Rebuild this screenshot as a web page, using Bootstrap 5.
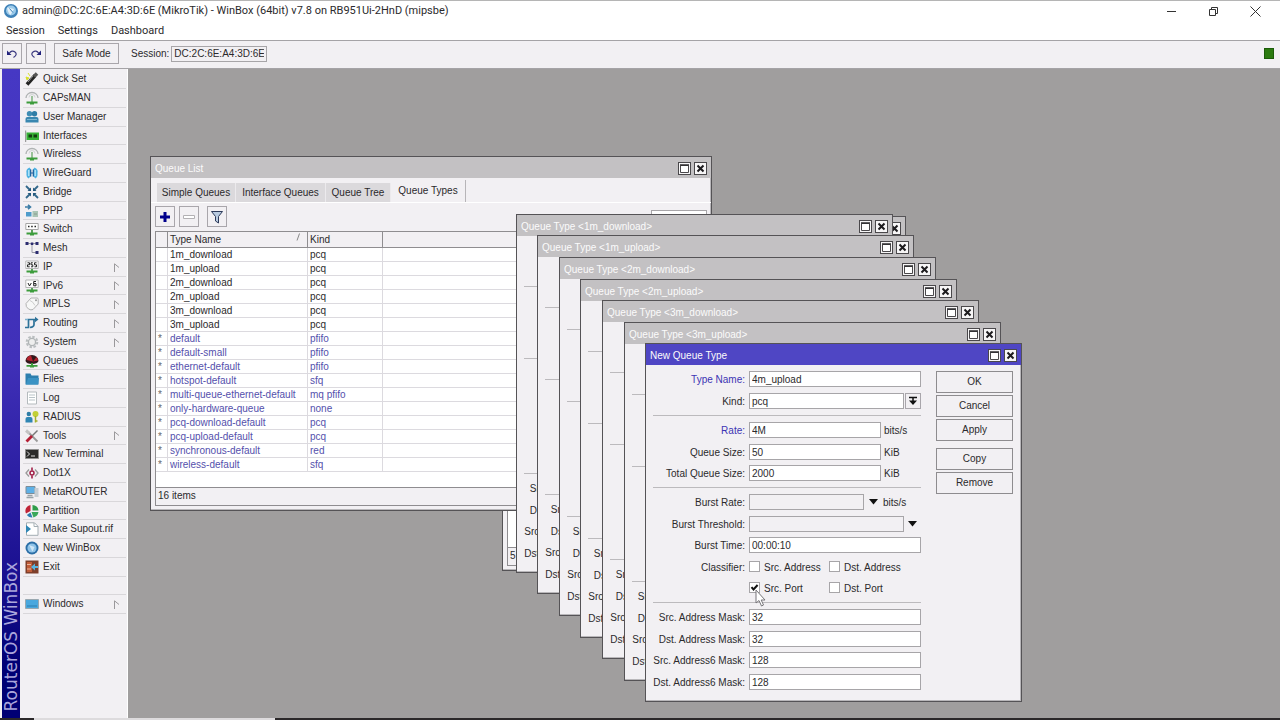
<!DOCTYPE html>
<html lang="en">
<head>
<meta charset="utf-8">
<meta name="viewport" content="width=device-width, initial-scale=1">
<title>WinBox</title>
<link rel="stylesheet" href="https://cdn.jsdelivr.net/npm/bootstrap@5.3.0/dist/css/bootstrap.min.css">
<style>
:root{--panel:#f2f0f3;--line:#a9a6ab;--ink:#2b2a2c;--blue:#3c34b4}
body{font:10px/14px "Liberation Sans",Arial,sans-serif;color:var(--ink);background:var(--panel)}
.ui-sys{font-family:Roboto,sans-serif;font-size:11px;line-height:16px}
.caption-bar{height:22px;border-top:1px solid #b5b5b5;padding-bottom:1px}
.menu-bar{height:19px;border-bottom:1px solid #a5a3a6;padding:1px 6px 0;gap:13px}
.menu-bar a,.side-nav a{color:var(--ink);text-decoration:none}
.sys-btn{width:42px;height:20px;border:0;background:none;padding:0;line-height:0}
.tool-strip{height:28px;border-bottom:1px solid #a5a3a6;padding:0 2px 2px}
.flat-btn{font:inherit;color:var(--ink);background:var(--panel);border:1px solid var(--line);border-radius:0;padding:0;display:flex;align-items:center;justify-content:center}
.sq{width:20px;height:21px}
.safe-btn{width:65px;height:21px}
.session-label{margin:0 2px 0 12px}
.field{font:inherit;color:var(--ink);background:#fff;border:1px solid #a7a5a8;border-radius:0;padding:0 2px;height:16px;min-height:0}
.field:disabled{background:var(--panel);opacity:1}
.session-box{width:96px;background:var(--panel)}
.led{width:10px;height:11px;background:#2c7a10;border:1px solid #1c5c0a;margin-right:4px}
.brand-strip{width:18px;margin-left:2px;background:linear-gradient(#4638c4 0,#4030b8 45%,#1a1090 78%,#000074 92%);color:#aaa6dc;font:17px/18px "DejaVu Sans",sans-serif}
.brand-strip span{writing-mode:vertical-rl;transform:rotate(180deg);padding-top:7px;white-space:pre}
.side-nav{width:108px;margin:0;padding:1px 1px 0 3px;border-right:1px solid #fff}
.side-nav li{height:19px;border-bottom:1px solid #d9d7da}
.side-nav li:nth-child(4n){height:18px}
.side-nav a{height:100%;padding-left:2px;padding-right:6px}
.side-nav .ico{width:14px;height:14px;margin-right:4px;flex:none}
.desk{background:#a09e9e}
.bottom-edge{height:2px;background:#2b282a}
.bottom-edge i{width:241px;margin-left:34px;background:#dddbdd}
.win{position:absolute;background:var(--panel);border:1px solid #555356;box-shadow:inset -1px -1px #b9b7ba}
.win-title{height:21px;background:#c3c1c3;color:#fbfbfb;padding:2px 4px 0;gap:3px}
.win-title.live{background:#4f46c4}
.win-btn{width:13px;height:13px;background:#f7f6f7;border:1px solid #4a484b;padding:0;line-height:0}
.win-queue{left:22px;top:87px;width:562px;height:355px}
.win-under{left:374px;top:147px;width:404px;height:355px}
.qtabs{padding:2px 4px 0 6px;height:25px;border-bottom:1px solid #fff}
.qtabs button{font:inherit;color:var(--ink);border:0;border-right:1px solid #eceaed;background:#dbd9dc;height:19px;padding:0;margin-top:3px;white-space:nowrap}
.qtabs .on{background:var(--panel);height:22px;margin:0;border-right:1px solid #b7b5b8}
.t1{width:79px}.t2{width:90px}.t3{width:65px}.t4{width:75px}
.find-box{width:56px}
.qbuttons{padding:3px 4px 0}
.qgrid{table-layout:fixed;border-collapse:separate;border-spacing:0;width:100%}
.qgrid th{height:16px;padding:1px 2px 0;font-weight:400;line-height:14px;background:var(--panel);border-right:1px solid #8f8d90;border-bottom:1px solid #8f8d90}
.qgrid td{height:14px;padding:0 2px;line-height:13px;border-right:1px solid #dcdadf;border-bottom:1px solid #dcdadf;white-space:nowrap}
.qgrid .dyn td{color:#5450ac}
.qgrid .dyn td:first-child{color:#666}
.frame-list{border:1px solid #8f8d90;border-right-color:#c5c3c6;background:#fff;margin:4px}
.status-line{height:18px;background:var(--panel);border-top:1px solid #8f8d90;padding:1px 2px}
.dlg{width:377px}
.dlg-body{padding:6px 8px 0 7px}
.dlg-form{width:268px}
.group{border-top:1px solid #bcbabd;padding-top:6px}
.group:first-child{border:0;padding:0 0 1px}
.line{height:22px}
.line:nth-child(even){height:21px}
.line .cap{width:96px;padding-right:4px;text-align:right;line-height:17px;flex:none;white-space:nowrap}
.line .changed{color:var(--blue)}
.line .unit{line-height:17px;padding-left:3px;white-space:nowrap}
.w-rate{width:132px}.w-burst{width:115px}.w-thr{width:155px;flex:none}
.drop{width:19px;height:16px;border:0;background:none;padding:0;line-height:0}
.drop-box{width:16px;height:16px;margin-left:1px}
.tick{appearance:none;width:11px;height:11px;margin:2px 4px 0 0;background:#fff;border:1px solid #a7a5a8;flex:none}
.tick:checked{background:#fff url("data:image/svg+xml,%3Csvg xmlns='http://www.w3.org/2000/svg' viewBox='0 0 9 9'%3E%3Cpath d='M1.5 4.2l2 2.3L7.6 2' fill='none' stroke='%23111' stroke-width='2'/%3E%3C/svg%3E")}
.opt{width:80px;line-height:17px;white-space:nowrap}
.dlg-btns{width:77px;gap:2px}
.dlg-btns button{height:22px;border-color:#8e8c8f}
.dlg-btns .apart{margin-top:5px}
.pointer{position:absolute;left:109px;top:245px;width:12px;height:18px}
.dlg-foot{height:6px}
</style>
</head>
<body class="vh-100 overflow-hidden d-flex flex-column">

<svg class="d-none" xmlns="http://www.w3.org/2000/svg">
<symbol id="wand" viewBox="0 0 14 14"><path d="M1 5l3 1L2 8zM3 1l2 3" fill="#d8e02c" stroke="#d8e02c"/><path d="M2 12.500L10 3.500" stroke="#222" stroke-width="3.600"/><path d="M9 4.500l3-3" stroke="#555" stroke-width="3.600"/><path d="M3 10l5-6" stroke="#999"/></symbol>
<symbol id="antenna" viewBox="0 0 14 14"><path d="M1 7a6 5.500 0 0 1 12 0" fill="none" stroke="#aeb2b2" stroke-width="1.300"/><path d="M4 6.500a3 3 0 0 1 6 0" fill="none" stroke="#d0d4d4"/><path d="M7 5v6" stroke="#7bb07b" stroke-width="1.500"/><path d="M1.500 11.500h11M5 12.500h4" stroke="#3c9c3c" stroke-width="1.800"/></symbol>
<symbol id="users" viewBox="0 0 14 14"><circle cx="4.500" cy="3.800" r="2.700" fill="#3f8db4"/><circle cx="9.500" cy="3.800" r="2.700" fill="#2f7da6"/><path d="M.5 12.500V9q0-2 2-2h9q2 0 2 2v3.500z" fill="#3987b0"/><path d="M2 9.500h10" stroke="#7ab6d2"/></symbol>
<symbol id="nic" viewBox="0 0 14 14"><path d="M.7 1.500V13" stroke="#888"/><path d="M1.500 3.500H14V11H1.500z" fill="#35b135"/><path d="M3.500 5.500H7v3H3.500zM8.500 5.500H12v3H8.500z" fill="#123d12"/></symbol>
<symbol id="guard" viewBox="0 0 14 14"><path d="M4.500 1.500Q.5 3 1.500 7q-.5 4 2 5.500L6 10V3.500zM9.500 1.500q4 1.500 3 5.500.5 4-2 5.500L8 10V3.500z" fill="#4fb2e2"/><path d="M3.800 4v6M10.200 4v6" stroke="#c4ecfa" stroke-width="1.200"/><path d="M5.700 3.500v7M8.300 3.500v7M5.700 7h2.600" stroke="#1c5f9c" stroke-width="1.200"/></symbol>
<symbol id="bridge" viewBox="0 0 14 14"><path d="M1 1l4 4M13 1L9 5M1 13l4-4M13 13L9 9" stroke="#33688c" stroke-width="1.800"/><path d="M6 2.500V6H2.500zM8 2.500V6h3.500zM6 11.500V8H2.500zM8 11.500V8h3.500z" fill="#25587c"/></symbol>
<symbol id="ppp" viewBox="0 0 14 14"><path d="M0 3h4.500M3 .8L5.500 3 3 5.200" fill="none" stroke="#3b7ca6" stroke-width="1.600"/><path d="M1 8h5.500v4.500H1z" fill="#4f9ccb"/><path d="M7.500 7h5.500v6H7.500z" fill="#a9c4b4"/><path d="M9 10h3" stroke="#8a9a90"/></symbol>
<symbol id="switch" viewBox="0 0 14 14"><path d="M.8 1.500h12.400v6H.8z" fill="#fff" stroke="#a5a5a5"/><path d="M3 4.500h1.500M6.200 4.500h1.500M9.500 4.500H11" stroke="#222" stroke-width="1.500"/><path d="M7 8v3" stroke="#58a058" stroke-width="2"/><path d="M1.500 11.500h11M5 12.500h4" stroke="#3c9c3c" stroke-width="1.800"/></symbol>
<symbol id="mesh" viewBox="0 0 14 14"><path d="M2 2.500h9M7 3v8.500h4.500" fill="none" stroke="#9a9aa8"/><path d="M.5 1h3v3h-3zM5.800 1.500h2.500V4H5.800zM10.500 1h3v3h-3zM10.500 10h3v3h-3z" fill="#2c2c70"/></symbol>
<symbol id="ip" viewBox="0 0 14 14"><path d="M.8 1h12.400v7.500H.8z" fill="#fff" stroke="#b5b5b5"/><path d="M2.500 2.800h2v2h-2v2h2.200M7.800 2.800H6v2h1.800v2H6M11.500 2.800h-2v2h2v2h-2" fill="none" stroke="#222"/><path d="M7 9v2" stroke="#58a058" stroke-width="2"/><path d="M1.500 11.500h11M5 12.500h4" stroke="#3c9c3c" stroke-width="1.800"/></symbol>
<symbol id="ip6" viewBox="0 0 14 14"><path d="M.8 1h12.400v7.500H.8z" fill="#fff" stroke="#b5b5b5"/><path d="M3 4l1.500 3L6.300 4M11 2.500H8.700v4.300H11V4.600H9" fill="none" stroke="#222"/><path d="M7 9v2" stroke="#58a058" stroke-width="2"/><path d="M1.500 11.500h11M5 12.500h4" stroke="#3c9c3c" stroke-width="1.800"/></symbol>
<symbol id="tag" viewBox="0 0 14 14"><path d="M6 1h6q1.200 0 1.200 1.200V7L8 12.500Q6 13.500 3.500 12 .5 10 1 6.500z" fill="#f7f7f7" stroke="#b2b2b2"/><path d="M5 3.500q3 1 5 5" stroke="#ccc" fill="none"/><circle cx="11" cy="3.300" r="1" fill="#999"/></symbol>
<symbol id="route" viewBox="0 0 14 14"><path d="M0 11.500h3.500v-8H11M9 3.500v5q0 2.500-4 3" fill="none" stroke="#2e7299" stroke-width="1.700"/><path d="M10 .8L13.500 3.500 10 6.200z" fill="#2e7299"/><path d="M0 3.500h3" stroke="#7fb2cf" stroke-width="1.500"/></symbol>
<symbol id="gear" viewBox="0 0 14 14"><circle cx="7" cy="7" r="5.300" fill="none" stroke="#b9bdbf" stroke-width="2" stroke-dasharray="2.500 1.600"/><circle cx="7" cy="7" r="3.600" fill="#eee" stroke="#b0b4b6" stroke-width="1.400"/></symbol>
<symbol id="queue" viewBox="0 0 14 14"><path d="M.5 7a6.500 6 0 0 1 13 0q-1 3-6.500 3T.5 7z" fill="#32181c"/><path d="M1.500 6A5.500 5 0 0 1 6 1.500l2 6zM8 7.500L11.500 3q1.500 1.500 1.500 3.500z" fill="#b3222e"/><path d="M7 9v2" stroke="#3c9c3c" stroke-width="2"/><path d="M1.500 11.800h11M5 12.500h4" stroke="#3c9c3c" stroke-width="1.800"/></symbol>
<symbol id="folder" viewBox="0 0 14 14"><path d="M.5 12.500V1.500h5l1 2h7v9z" fill="#2d7fae"/><path d="M1 12.500L3 6h11l-1 6.500z" fill="#3b93c4"/></symbol>
<symbol id="page" viewBox="0 0 14 14"><path d="M2.500 1h9v12h-9z" fill="#fff" stroke="#b4babd"/><path d="M4 4h6M4 6.500h6M4 9h6" stroke="#b9c3c8"/></symbol>
<symbol id="radius" viewBox="0 0 14 14"><circle cx="3.800" cy="4" r="2.200" fill="#2f7da6"/><path d="M.5 12.500V9q0-2 2-2h3q2 0 2 2v3.500z" fill="#2f86b4"/><circle cx="10.500" cy="4" r="3" fill="#c2cf37"/><path d="M10.500 6v6.500M10.500 11h2" stroke="#a3b02b" stroke-width="1.500"/></symbol>
<symbol id="tools" viewBox="0 0 14 14"><path d="M3.500 3.500l9 9" stroke="#999" stroke-width="1.800"/><path d="M1 1.500l3.500 3" stroke="#c4c4c4" stroke-width="3"/><path d="M12.500 1.500L7 7" stroke="#777" stroke-width="1.500"/><path d="M7 7l-5.500 5.500" stroke="#b51e35" stroke-width="2.800"/></symbol>
<symbol id="term" viewBox="0 0 14 14"><path d="M.5 2.500h13v9H.5z" fill="#2a2a2a" stroke="#8e8e8e"/><path d="M2 4.500L4.500 7 2 9.500M6 9h4" fill="none" stroke="#ddd"/></symbol>
<symbol id="dot1x" viewBox="0 0 14 14"><circle cx="7" cy="7" r="2" fill="none" stroke="#a02048" stroke-width="1.500"/><path d="M4 3.500L1 7l3 3.500M10 3.500L13 7l-3 3.500" fill="none" stroke="#999" stroke-width="1.300"/><path d="M7 1.500V4.500M7 9.500v3" stroke="#a02048" stroke-width="1.600"/></symbol>
<symbol id="meta" viewBox="0 0 14 14"><path d="M1 1.500h9v7H1z" fill="#5eb0e6" stroke="#7d8d98"/><path d="M9.500 3h4v9h-4z" fill="#c6cdd2"/><path d="M2.500 10.500h5M1.500 12.500h7" stroke="#98a2a8" stroke-width="1.300"/></symbol>
<symbol id="pie" viewBox="0 0 14 14"><path d="M5.500 1A6 6 0 0 0 1 9.500L5.500 7z" fill="#c02437"/><path d="M7.500 1a6 6 0 0 1 6 5.500h-6z" fill="#2f9d4a"/><path d="M6.500 8h7q-.5 4-5 5.500z" fill="#3aa85a"/><path d="M1.800 11L5.500 8.500l2 5q-3.500.3-5.700-2.500z" fill="#2e7db0"/></symbol>
<symbol id="supout" viewBox="0 0 14 14"><path d="M1.500.8h8l3.500 3.500v9H1.500z" fill="#fff" stroke="#a3adb3"/><path d="M1 3l5 4-5 4z" fill="#2f86b4"/><path d="M9 1v3.500h4" fill="none" stroke="#a3adb3"/></symbol>
<symbol id="winbox" viewBox="0 0 14 14"><circle cx="7" cy="7" r="6.500" fill="#2b6ea6"/><circle cx="7" cy="7" r="4.600" fill="#8fc3e8"/><path d="M4 4l5.500 2L7.500 10.500z" fill="#cfe6f6"/></symbol>
<symbol id="exit" viewBox="0 0 14 14"><path d="M.5.5h13v13H.5z" fill="#7e3f2a"/><path d="M2 2h5v10H2z" fill="#c05c38"/><path d="M2 4.500h4M2 9h4" stroke="#e9b49b"/><path d="M6 7l4-3.500v7z" fill="#56b4e0"/><path d="M10 7h3" stroke="#56b4e0" stroke-width="2"/></symbol>
<symbol id="wins" viewBox="0 0 14 14"><path d="M.5 2.500h13v9H.5z" fill="#4aa8de" stroke="#9aa8b0"/><path d="M2 9h10" stroke="#2d7fb0"/></symbol>
<symbol id="flag" viewBox="0 0 6 9"><path d="M.5 9V.8L5 4.500" fill="none" stroke="#9a989b"/></symbol>
<symbol id="g-max" viewBox="0 0 11 11"><path d="M1.500 2.500h8v7h-8z" fill="#fff" stroke="#4a484b"/><path d="M1 2h9" stroke="#2d2b2e" stroke-width="1.500"/></symbol>
<symbol id="g-x" viewBox="0 0 11 11"><path d="M2.500 2.500l6 6M8.500 2.500l-6 6" stroke="#1d1b1e" stroke-width="2"/></symbol>
<symbol id="g-tri" viewBox="0 0 9 6"><path d="M0 0h9L4.500 5.500z" fill="#111"/></symbol>
</svg>

<header>
  <div class="caption-bar ui-sys bg-white d-flex align-items-center">
    <svg class="ms-1" width="14" height="16" viewBox="1 0 14 16"><circle cx="8" cy="8" r="7" fill="#3f82b8"/><circle cx="8" cy="7.500" r="5" fill="#9ccbea"/><path d="M4 4.500l7 1.500-3.500 6q-2.500-2-3.500-7.500z" fill="#e4f1fa"/><path d="M6.500 5.500l3.500 4" stroke="#3f82b8"/></svg>
    <span class="ms-1 flex-grow-1 text-nowrap">admin@DC:2C:6E:A4:3D:6E (MikroTik) - WinBox (64bit) v7.8 on RB951Ui-2HnD (mipsbe)</span>
    <button class="sys-btn" aria-label="Minimize"><svg width="11" height="11"><path d="M1 5.500h9" stroke="#333"/></svg></button>
    <button class="sys-btn" aria-label="Restore"><svg width="11" height="11"><path d="M1.500 3.500h6v6h-6zM3.500 3V1.500h6v6H8" fill="none" stroke="#333"/></svg></button>
    <button class="sys-btn me-1" aria-label="Close"><svg width="11" height="11"><path d="M.5.500l10 10M10.500.500l-10 10" stroke="#333"/></svg></button>
  </div>
  <nav class="menu-bar ui-sys bg-white d-flex">
    <a href="#">Session</a><a href="#">Settings</a><a href="#">Dashboard</a>
  </nav>
  <div class="tool-strip d-flex align-items-center">
    <button class="flat-btn sq" aria-label="Undo"><svg width="12" height="12"><path d="M1 2.500v4.500h4.500z" fill="#20207c"/><path d="M3 5.500Q6 1.500 9 4t-1.500 5.500" fill="none" stroke="#3c3a80" stroke-width="1.200"/></svg></button>
    <button class="flat-btn sq ms-1" aria-label="Redo"><svg width="12" height="12"><path d="M11 2.500v4.500H6.500z" fill="#20207c"/><path d="M9 5.500Q6 1.500 3 4t1.500 5.500" fill="none" stroke="#3c3a80" stroke-width="1.200"/></svg></button>
    <button class="flat-btn safe-btn ms-2">Safe Mode</button>
    <label for="session" class="session-label">Session:</label>
    <input id="session" class="field session-box" value="DC:2C:6E:A4:3D:6E" readonly>
    <span class="led ms-auto"></span>
  </div>
</header>

<main class="d-flex flex-grow-1 overflow-hidden">
  <div class="brand-strip d-flex align-items-end flex-shrink-0"><span>RouterOS WinBox</span></div>
  <ul class="side-nav list-unstyled flex-shrink-0" id="menu"></ul>
  <section class="desk position-relative flex-grow-1 overflow-hidden" id="desk">

    <div class="win win-under d-flex flex-column">
      <div class="win-title d-flex align-items-center justify-content-end">
        <button class="win-btn" aria-label="Close"><svg width="11" height="11"><use href="#g-x"/></svg></button>
      </div>
      <div class="frame-list flex-grow-1 d-flex flex-column"><div class="status-line mt-auto">5 items</div></div>
    </div>

    <div class="win win-queue d-flex flex-column">
      <div class="win-title d-flex align-items-center">
        <span class="flex-grow-1">Queue List</span>
        <button class="win-btn" aria-label="Maximize"><svg width="11" height="11"><use href="#g-max"/></svg></button>
        <button class="win-btn" aria-label="Close"><svg width="11" height="11"><use href="#g-x"/></svg></button>
      </div>
      <div class="qtabs d-flex" role="tablist">
        <button class="t1" role="tab">Simple Queues</button><button class="t2" role="tab">Interface Queues</button><button class="t3" role="tab">Queue Tree</button><button class="t4 on" role="tab">Queue Types</button>
      </div>
      <div class="qbuttons d-flex align-items-start">
        <button class="flat-btn sq" aria-label="Add"><svg width="12" height="12"><path d="M6 1v10M1 6h10" stroke="#00008c" stroke-width="3"/></svg></button>
        <button class="flat-btn sq ms-1" aria-label="Remove"><svg width="12" height="12"><path d="M.5 4.500h11v3H.5z" fill="#fff" stroke="#b3b1b4"/></svg></button>
        <button class="flat-btn sq ms-2" aria-label="Filter"><svg width="14" height="14"><path d="M1.500 1.500h11l-4 5V13l-3-2V6.500z" fill="#b9cbe0" stroke="#2c3a5a"/></svg></button>
        <input class="field find-box ms-auto mt-1" aria-label="Find" placeholder="Find">
      </div>
      <div class="frame-list flex-grow-1 d-flex flex-column">
        <table class="qgrid">
          <colgroup><col width="12"><col width="140"><col width="75"><col></colgroup>
          <thead><tr><th></th><th><span class="d-flex justify-content-between pe-1"><span>Type Name</span><svg width="5" height="8"><path d="M1 7.500l2.500-7" stroke="#888"/></svg></span></th><th>Kind</th><th></th></tr></thead>
          <tbody>
            <tr><td></td><td>1m_download</td><td>pcq</td><td></td></tr>
            <tr><td></td><td>1m_upload</td><td>pcq</td><td></td></tr>
            <tr><td></td><td>2m_download</td><td>pcq</td><td></td></tr>
            <tr><td></td><td>2m_upload</td><td>pcq</td><td></td></tr>
            <tr><td></td><td>3m_download</td><td>pcq</td><td></td></tr>
            <tr><td></td><td>3m_upload</td><td>pcq</td><td></td></tr>
            <tr class="dyn"><td>*</td><td>default</td><td>pfifo</td><td></td></tr>
            <tr class="dyn"><td>*</td><td>default-small</td><td>pfifo</td><td></td></tr>
            <tr class="dyn"><td>*</td><td>ethernet-default</td><td>pfifo</td><td></td></tr>
            <tr class="dyn"><td>*</td><td>hotspot-default</td><td>sfq</td><td></td></tr>
            <tr class="dyn"><td>*</td><td>multi-queue-ethernet-default</td><td>mq pfifo</td><td></td></tr>
            <tr class="dyn"><td>*</td><td>only-hardware-queue</td><td>none</td><td></td></tr>
            <tr class="dyn"><td>*</td><td>pcq-download-default</td><td>pcq</td><td></td></tr>
            <tr class="dyn"><td>*</td><td>pcq-upload-default</td><td>pcq</td><td></td></tr>
            <tr class="dyn"><td>*</td><td>synchronous-default</td><td>red</td><td></td></tr>
            <tr class="dyn"><td>*</td><td>wireless-default</td><td>sfq</td><td></td></tr>
          </tbody>
        </table>
        <div class="status-line mt-auto">16 items</div>
      </div>
    </div>

    <form class="win dlg" id="live">
      <div class="win-title live d-flex align-items-center">
        <span class="flex-grow-1">New Queue Type</span>
        <button type="button" class="win-btn" aria-label="Maximize"><svg width="11" height="11"><use href="#g-max"/></svg></button>
        <button type="button" class="win-btn" aria-label="Close"><svg width="11" height="11"><use href="#g-x"/></svg></button>
      </div>
      <div class="dlg-body d-flex justify-content-between">
        <div class="dlg-form">
          <div class="group">
            <div class="line d-flex"><label class="cap changed" for="f-name">Type Name:</label><input class="field flex-fill" id="f-name" size="4" value="4m_upload"></div>
            <div class="line d-flex"><label class="cap" for="f-kind">Kind:</label><input class="field w-thr" id="f-kind" value="pcq"><button type="button" class="flat-btn drop-box" aria-label="Choose kind"><svg width="10" height="10"><path d="M1 1.500h8M5 2v4" stroke="#111" stroke-width="1.500"/><path d="M1 4.500h8l-4 4.500z" fill="#111"/></svg></button></div>
          </div>
          <div class="group">
            <div class="line d-flex"><label class="cap changed" for="f-rate">Rate:</label><input class="field w-rate" id="f-rate" value="4M"><span class="unit">bits/s</span></div>
            <div class="line d-flex"><label class="cap" for="f-size">Queue Size:</label><input class="field w-rate" id="f-size" value="50"><span class="unit">KiB</span></div>
            <div class="line d-flex"><label class="cap" for="f-total">Total Queue Size:</label><input class="field w-rate" id="f-total" value="2000"><span class="unit">KiB</span></div>
          </div>
          <div class="group">
            <div class="line d-flex"><label class="cap" for="f-brate">Burst Rate:</label><input class="field w-burst" id="f-brate" disabled><button type="button" class="drop" aria-label="Show burst rate"><svg width="9" height="6"><use href="#g-tri"/></svg></button><span class="unit ps-0">bits/s</span></div>
            <div class="line d-flex"><label class="cap" for="f-bthr">Burst Threshold:</label><input class="field w-thr" id="f-bthr" disabled><button type="button" class="drop" aria-label="Show burst threshold"><svg width="9" height="6"><use href="#g-tri"/></svg></button></div>
            <div class="line d-flex"><label class="cap" for="f-btime">Burst Time:</label><input class="field flex-fill" id="f-btime" size="4" value="00:00:10"></div>
            <div class="line d-flex"><span class="cap">Classifier:</span><label class="opt d-flex"><input type="checkbox" class="tick">Src. Address</label><label class="opt d-flex"><input type="checkbox" class="tick">Dst. Address</label></div>
            <div class="line d-flex"><span class="cap"></span><label class="opt d-flex"><input type="checkbox" class="tick" checked>Src. Port</label><label class="opt d-flex"><input type="checkbox" class="tick">Dst. Port</label></div>
          </div>
          <div class="group">
            <div class="line d-flex"><label class="cap" for="f-m1">Src. Address Mask:</label><input class="field flex-fill" id="f-m1" size="4" value="32"></div>
            <div class="line d-flex"><label class="cap" for="f-m2">Dst. Address Mask:</label><input class="field flex-fill" id="f-m2" size="4" value="32"></div>
            <div class="line d-flex"><label class="cap" for="f-m3">Src. Address6 Mask:</label><input class="field flex-fill" id="f-m3" size="4" value="128"></div>
            <div class="line d-flex"><label class="cap" for="f-m4">Dst. Address6 Mask:</label><input class="field flex-fill" id="f-m4" size="4" value="128"></div>
          </div>
        </div>
        <div class="dlg-btns d-flex flex-column">
          <button type="button" class="flat-btn">OK</button>
          <button type="button" class="flat-btn">Cancel</button>
          <button type="button" class="flat-btn">Apply</button>
          <button type="button" class="flat-btn apart">Copy</button>
          <button type="button" class="flat-btn">Remove</button>
        </div>
      </div>
      <div class="dlg-foot"></div>
      <svg class="pointer" viewBox="0 0 12 18"><path d="M1 1v13l3-2.500L6.500 17l2-1-2.300-5H10z" fill="#fff" stroke="#77757a"/></svg>
    </form>
  </section>
</main>
<footer class="bottom-edge d-flex"><i></i></footer>

<script>
// Side menu: [symbol, caption, has submenu]
const items = [["wand","Quick Set"],["antenna","CAPsMAN"],["users","User Manager"],["nic","Interfaces"],["antenna","Wireless"],["guard","WireGuard"],["bridge","Bridge"],["ppp","PPP"],["switch","Switch"],["mesh","Mesh"],["ip","IP",1],["ip6","IPv6",1],["tag","MPLS",1],["route","Routing",1],["gear","System",1],["queue","Queues"],["folder","Files"],["page","Log"],["radius","RADIUS"],["tools","Tools",1],["term","New Terminal"],["dot1x","Dot1X"],["meta","MetaROUTER"],["pie","Partition"],["supout","Make Supout.rif"],["winbox","New WinBox"],["exit","Exit"],null,["wins","Windows",1]];
document.getElementById("menu").innerHTML = items.map(i => i
  ? `<li><a href="#" class="d-flex align-items-center"><svg class="ico"><use href="#${i[0]}"/></svg><span class="flex-grow-1 text-nowrap">${i[1]}</span>${i[2] ? '<svg width="6" height="9"><use href="#flag"/></svg>' : ""}</a></li>`
  : "<li></li>").join("");

// Cascaded queue type windows behind the active dialog
const desk = document.getElementById("desk"), live = document.getElementById("live");
const place = (el, n) => { el.style.left = Math.round(387.6 + n * 21.6) + "px"; el.style.top = Math.round(144.8 + n * 21.6) + "px"; };
const blank = n => '<div class="line"></div>'.repeat(n);
const masks = ["Src. Address Mask:", "Dst. Address Mask:", "Src. Address6 Mask:", "Dst. Address6 Mask:"].map(t => `<div class="line d-flex"><span class="cap">${t}</span></div>`).join("");
["1m_download","1m_upload","2m_download","2m_upload","3m_download","3m_upload"].forEach((name, n) => {
  const w = document.createElement("div");
  w.className = "win dlg";
  w.innerHTML = `<div class="win-title d-flex align-items-center"><span class="flex-grow-1">Queue Type &lt;${name}&gt;</span>
    <button class="win-btn" aria-label="Maximize"><svg width="11" height="11"><use href="#g-max"/></svg></button>
    <button class="win-btn" aria-label="Close"><svg width="11" height="11"><use href="#g-x"/></svg></button></div>
    <div class="dlg-body"><div class="dlg-form"><div class="group">${blank(2)}</div><div class="group">${blank(3)}</div><div class="group">${blank(5)}</div><div class="group">${masks}</div></div></div><div class="dlg-foot"></div>`;
  place(w, n);
  desk.insertBefore(w, live);
});
place(live, 6);
</script>
<script src="https://cdn.jsdelivr.net/npm/bootstrap@5.3.0/dist/js/bootstrap.bundle.min.js"></script>
</body>
</html>
